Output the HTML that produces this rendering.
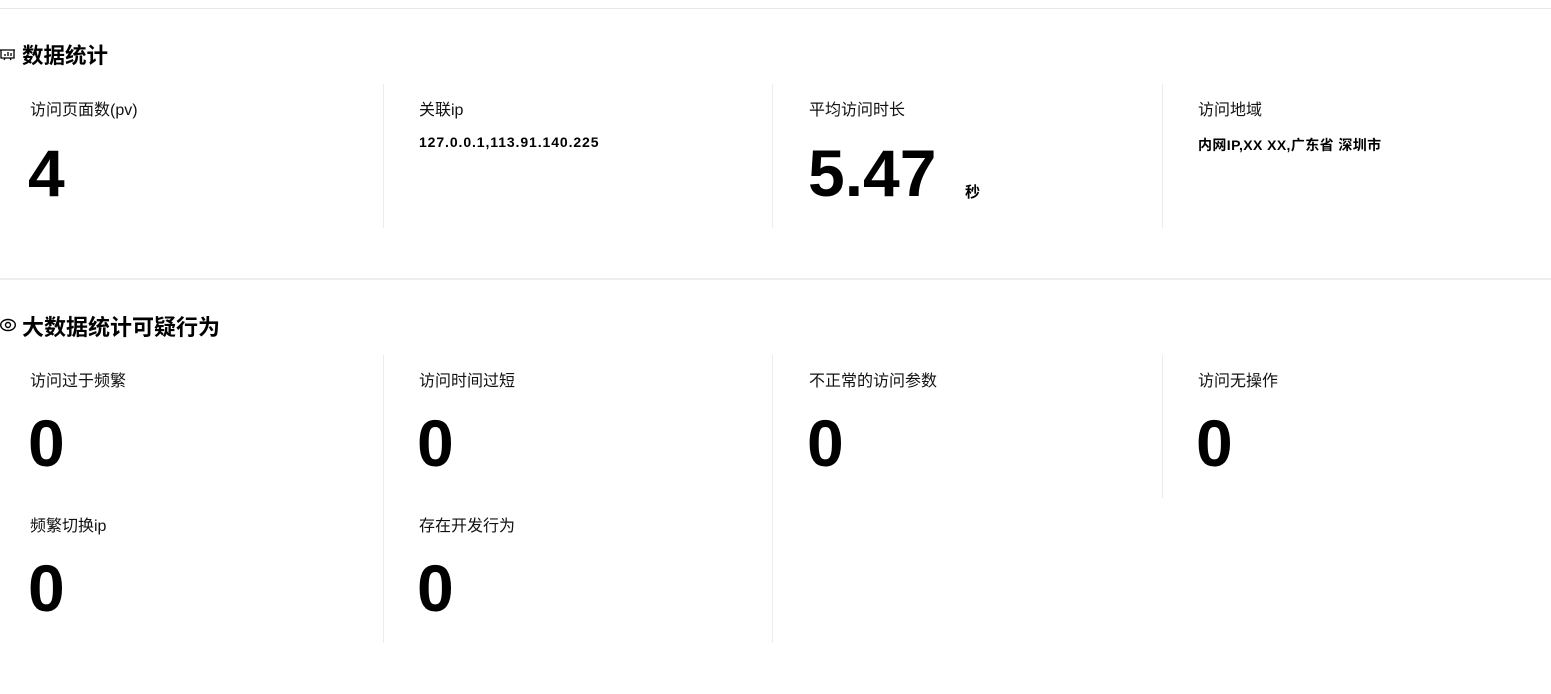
<!DOCTYPE html>
<html><head><meta charset="utf-8"><style>
body{margin:0;width:1551px;height:694px;background:#fff;position:relative;overflow:hidden;font-family:"Liberation Sans","Noto Sans CJK SC",sans-serif;color:#000}
.a{position:absolute;white-space:nowrap}
.hr{position:absolute;left:0;width:1551px;height:1px;background:#e8e8e8}
.vr{position:absolute;width:1px;background:#ececec}
.t{font-size:21.5px;font-weight:bold}
.l{font-size:16px;color:#111}
.n{font-size:66px;font-weight:bold;line-height:66px}
.s{font-size:14px;font-weight:bold}
</style></head><body>
<div class="hr" style="top:8px"></div>
<div class="hr" style="top:278px;height:2px;background:#eee"></div>

<svg class="a" style="left:0;top:47px" width="16" height="16" viewBox="0 0 16 16" fill="none" stroke="#000" stroke-width="1.3"><path d="M0 3H15M1 3V11H14V3M4 13L5 11M11 13L10 11M5 9V7M8 9V5M11 9V6"/></svg>
<div class="a t" style="left:22px;top:39px">数据统计</div>

<div class="vr" style="left:383px;top:84px;height:144px"></div>
<div class="vr" style="left:772px;top:84px;height:144px"></div>
<div class="vr" style="left:1162px;top:84px;height:144px"></div>

<div class="a l" style="left:30px;top:96px">访问页面数(pv)</div>
<div class="a n" style="left:28px;top:140px">4</div>
<div class="a l" style="left:419px;top:96px">关联ip</div>
<div class="a s" style="left:419px;top:134px;letter-spacing:0.9px">127.0.0.1,113.91.140.225</div>
<div class="a l" style="left:809px;top:96px">平均访问时长</div>
<div class="a n" style="left:808px;top:140px">5.47</div>
<div class="a s" style="left:965px;top:181px;font-size:15px">秒</div>
<div class="a l" style="left:1198px;top:96px">访问地域</div>
<div class="a s" style="left:1198px;top:135px;letter-spacing:0.4px">内网IP,XX XX,广东省 深圳市</div>

<svg class="a" style="left:0;top:318px" width="17" height="14" viewBox="0 0 17 14" fill="none" stroke="#000" stroke-width="1.4"><ellipse cx="8" cy="7" rx="7.3" ry="5.5"/><circle cx="8" cy="7" r="2.5"/></svg>
<div class="a t" style="left:22px;top:310px;font-size:22px">大数据统计可疑行为</div>

<div class="vr" style="left:383px;top:355px;height:288px"></div>
<div class="vr" style="left:772px;top:355px;height:288px"></div>
<div class="vr" style="left:1162px;top:355px;height:143px"></div>

<div class="a l" style="left:30px;top:367px">访问过于频繁</div>
<div class="a n" style="left:28px;top:410px">0</div>
<div class="a l" style="left:419px;top:367px">访问时间过短</div>
<div class="a n" style="left:417px;top:410px">0</div>
<div class="a l" style="left:809px;top:367px">不正常的访问参数</div>
<div class="a n" style="left:807px;top:410px">0</div>
<div class="a l" style="left:1198px;top:367px">访问无操作</div>
<div class="a n" style="left:1196px;top:410px">0</div>
<div class="a l" style="left:30px;top:512px">频繁切换ip</div>
<div class="a n" style="left:28px;top:555px">0</div>
<div class="a l" style="left:419px;top:512px">存在开发行为</div>
<div class="a n" style="left:417px;top:555px">0</div>
</body></html>
